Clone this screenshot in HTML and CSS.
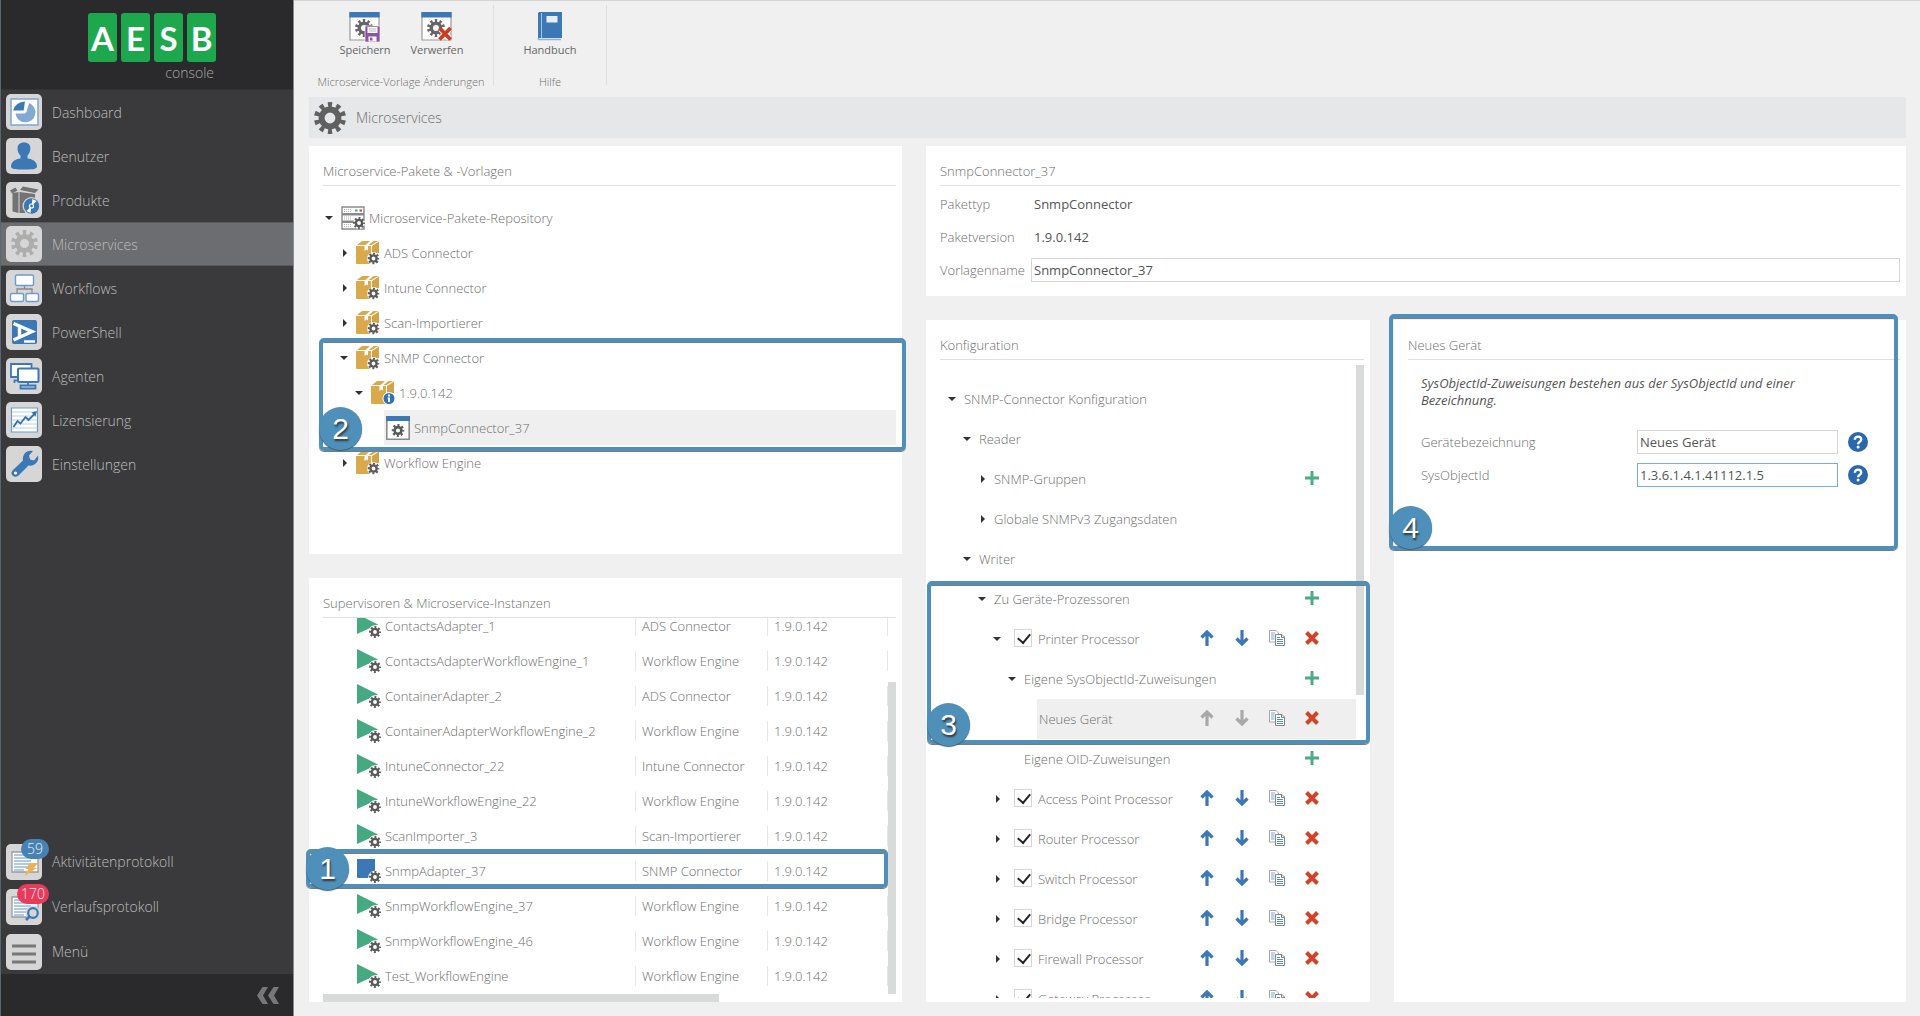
FILE: index.html
```
<!DOCTYPE html>
<html lang="de">
<head>
    <meta charset="UTF-8">
    <meta name="viewport" content="width=device-width, initial-scale=1.0">
    <title>AESB console - Microservices</title>
    <link rel="stylesheet" href="styles.css">
</head>
<body>
    <!-- Icon definitions -->
    <svg class="defs" aria-hidden="true">
        <symbol id="gear" viewBox="0 0 32 32">
            <circle cx="16" cy="16" r="8.4" fill="none" stroke="currentColor" stroke-width="6"/>
            <circle cx="16" cy="16" r="13" fill="none" stroke="currentColor" stroke-width="6" pathLength="20" stroke-dasharray="1 1" stroke-dashoffset="-4.5"/>
        </symbol>
        <symbol id="gear-small" viewBox="0 0 32 32">
            <circle cx="16" cy="16" r="8.4" fill="none" stroke="currentColor" stroke-width="6.5"/>
            <circle cx="16" cy="16" r="13" fill="none" stroke="currentColor" stroke-width="6" pathLength="16" stroke-dasharray="1 1" stroke-dashoffset="-3.5"/>
        </symbol>
        <symbol id="package" viewBox="0 0 24 24">
            <path d="M0 5h15v18H1q-1 0-1-1z" fill="#d9a94b"/>
            <path d="M16 5l7-4.500V12l-4 1-3 3z" fill="#d3a346"/>
            <path d="M1 4l5-4h17l-6.500 4z" fill="#d9a94b"/>
            <path d="M14 0h3.500l-5.500 4.500v5l-1.500-1-2 1.500V5z" fill="#fff"/>
            <path d="M0 4.500h15.500l7-4.300" stroke="#fff" stroke-width=".8" fill="none"/>
        </symbol>
        <symbol id="package-gear" viewBox="0 0 24 24">
            <use href="#package"/>
            <circle cx="17.500" cy="17.500" r="6.500" fill="#fff"/>
            <use href="#gear-small" x="11.500" y="11.500" width="12" height="12" color="#5a5a5a"/>
        </symbol>
        <symbol id="package-info" viewBox="0 0 24 24">
            <use href="#package"/>
            <circle cx="18" cy="17.500" r="6.500" fill="#fff"/>
            <circle cx="18" cy="17.500" r="5.500" fill="#2f72b8"/>
            <path d="M17 13.500h2v2h-2zM16.500 16.500H19V21h-2v-3.500h-.5z" fill="#fff"/>
        </symbol>
        <symbol id="server" viewBox="0 0 24 24">
            <path d="M1 1h22v6.700H1zM1 8.700h22v6.500H1zM1 16.200h22V23H1z" fill="#fff" stroke="#8a8a8a" stroke-width="1.400"/>
            <path d="M3 3.500h8M3 5.500h8M3 11h8M3 13h8M3 18.500h8M3 20.500h8" stroke="#b5b5b5" stroke-width="1.200" stroke-dasharray="1 1"/>
            <path d="M14 4.500h2.500" stroke="#45a982" stroke-width="2"/>
            <path d="M18.500 4.500H21" stroke="#d2452f" stroke-width="2"/>
            <circle cx="18" cy="17" r="6" fill="#fff"/>
            <use href="#gear-small" x="12" y="11" width="12" height="12" color="#5a5a5a"/>
        </symbol>
        <symbol id="template" viewBox="0 0 24 24">
            <path d="M.8.8h22.400v22.400H.8z" fill="#fff" stroke="#8a8a8a" stroke-width="1.600"/>
            <path d="M0 0h24v5H0z" fill="#3c78b5"/>
            <use href="#gear-small" x="5.500" y="8" width="13" height="13" color="#5a5a5a"/>
        </symbol>
        <symbol id="running" viewBox="0 0 24 24">
            <path d="M0 0l21 10.500L0 20z" fill="#45a982"/>
            <circle cx="18" cy="18" r="6.800" fill="#fff"/>
            <use href="#gear-small" x="12" y="12" width="12" height="12" color="#5a5a5a"/>
        </symbol>
        <symbol id="stopped" viewBox="0 0 24 24">
            <path d="M0 0h18v19H1q-1 0-1-1z" fill="#3c78b5"/>
            <circle cx="18" cy="18.500" r="6.800" fill="#fff"/>
            <use href="#gear-small" x="12" y="12" width="12" height="12" color="#5a5a5a"/>
        </symbol>
        <symbol id="plus" viewBox="0 0 16 16">
            <path d="M8 1v14M1 8h14" stroke="#4dab83" stroke-width="3"/>
        </symbol>
        <symbol id="up" viewBox="0 0 16 16">
            <path d="M8 16V3M2.500 7.500L8 2l5.500 5.500" fill="none" stroke="currentColor" stroke-width="3.200"/>
        </symbol>
        <symbol id="down" viewBox="0 0 16 16">
            <path d="M8 0v13M2.500 8.500L8 14l5.500-5.500" fill="none" stroke="currentColor" stroke-width="3.200"/>
        </symbol>
        <symbol id="copy" viewBox="0 0 16 16">
            <path d="M.5.500h6.500l2.500 2.500v9H.5z" fill="#fff" stroke="#a5a5a5"/>
            <path d="M2 3h4M2 5h3.500M2 7h3.500M2 9h3.500" stroke="#77a9dc"/>
            <path d="M6.500 4.500H13l2.500 2.500v8.500h-9z" fill="#fff" stroke="#858585"/>
            <path d="M12.500 4.500V7.500h3" fill="none" stroke="#858585"/>
            <path d="M8 7.500h3M8 9.500h6M8 11.500h6M8 13.500h6" stroke="#4c8fd3" stroke-width="1.200"/>
        </symbol>
        <symbol id="delete" viewBox="0 0 16 16">
            <path d="M2.500 2.500l11 11M13.500 2.500l-11 11" stroke="#cf4527" stroke-width="4"/>
        </symbol>
        <symbol id="help" viewBox="0 0 20 20">
            <circle cx="10" cy="10" r="10" fill="#2a67ad"/>
            <path d="M6.800 7.700C6.800 3.500 13.200 3.700 13.200 7.500c0 2.500-3.100 2.300-3.100 4.800" fill="none" stroke="#fff" stroke-width="2.400"/>
            <circle cx="10.100" cy="15" r="1.500" fill="#fff"/>
        </symbol>
        <symbol id="window-gear" viewBox="0 0 32 30">
            <path d="M1 1h29v27H1z" fill="#fff" stroke="#999" stroke-width="1.200"/>
            <path d="M.4 0h30.200v5.500H.4z" fill="#3c78b5"/>
            <use href="#gear" x="6" y="7" width="18" height="18" color="#666"/>
        </symbol>
        <symbol id="log" viewBox="0 0 36 36">
            <path d="M6 8h26v20H6z" fill="#fff" stroke="#9a9a9a" stroke-width="1.300"/>
            <path d="M8 11h17M8 14h17M8 17h17M8 20h16M8 23h14M8 26h10" stroke="#5e95cc" stroke-width="1.200"/>
        </symbol>
    </svg>

    <aside class="sidebar">
        <div class="logo">
            <div class="logo-tiles"><span>A</span><span>E</span><span>S</span><span>B</span></div>
            <div class="logo-sub">console</div>
        </div>

        <nav class="nav">
            <a href="#">
                <svg class="tile" viewBox="0 0 36 36">
                    <path d="M5 5h27v26H5z" fill="#fff" stroke="#7fa6d2" stroke-width="1.500"/>
                    <path d="M18 16.500H7.500A10.500 9.500 0 0 1 18 7.500z" fill="#3c78b5" transform="skewX(-8) translate(2 0)"/>
                    <path d="M20.500 18L23 9a10 10 0 1 1-13.500 10.500h9z" fill="#83a9d3"/>
                </svg>
                Dashboard
            </a>
            <a href="#">
                <svg class="tile" viewBox="0 0 36 36">
                    <path d="M18 4.500c9 0 7 10 3.500 13v3c5 .5 9.500 3 9.500 8 0 3-6 3-13 3s-13 0-13-3c0-5 4.500-7.500 9.500-8v-3C11 14.500 9 4.500 18 4.500z" fill="#3c78b5"/>
                </svg>
                Benutzer
            </a>
            <a href="#">
                <svg class="tile" viewBox="0 0 36 36">
                    <path d="M6.500 11l6-1v21l-6-1.500zM13.500 10l15.500 2v19H13.500zM4 8.500L9.500 5.500 11.500 8.500 6 11.500zM14 8l3-3.500 15.500 3L29 11z" fill="#737373"/>
                    <circle cx="25.500" cy="24" r="9" fill="#d6d6d6"/>
                    <circle cx="25.500" cy="24" r="7.700" fill="#3c78b5"/>
                    <path d="M25.500 24l1-7 4 2zM25.500 24l-1 7-4-2z" fill="#fff"/>
                    <circle cx="25.500" cy="24" r="2" fill="#3c78b5" stroke="#fff" stroke-width="1.200"/>
                </svg>
                Produkte
            </a>
            <a href="#" class="active">
                <svg class="tile" viewBox="0 0 36 36"><use href="#gear" x="5" y="4" width="27" height="27" color="#adadad"/></svg>
                Microservices
            </a>
            <a href="#">
                <svg class="tile" viewBox="0 0 36 36">
                    <path d="M18.500 15v4M11 23v-4h15v4" fill="none" stroke="#888" stroke-width="1.300"/>
                    <g fill="#fff" stroke="#6c9bcd" stroke-width="1.400">
                        <rect x="9.500" y="5" width="18" height="10.500" rx="1.500"/>
                        <rect x="4.500" y="23.500" width="13" height="8" rx="1.500"/>
                        <rect x="20" y="23.500" width="12.500" height="8" rx="1.500"/>
                    </g>
                </svg>
                Workflows
            </a>
            <a href="#">
                <svg class="tile" viewBox="0 0 36 36">
                    <rect x="6" y="6" width="25" height="24" rx="2" fill="#3c78b5"/>
                    <path d="M7.500 9.500L26 17.500 7.500 26M13.500 12v11" fill="none" stroke="#fff" stroke-width="3.400"/>
                    <path d="M18 27.500h11" stroke="#fff" stroke-width="2.400"/>
                </svg>
                PowerShell
            </a>
            <a href="#">
                <svg class="tile" viewBox="0 0 36 36">
                    <path d="M8.500 25v-2.500h4M5 6h20.500v13H5z" fill="#fff" stroke="#3c78b5" stroke-width="1.800"/>
                    <rect x="12" y="10.500" width="20.500" height="13.500" rx="1" fill="#fff" stroke="#3c78b5" stroke-width="2"/>
                    <path d="M22 24v3M14.500 27.500h15v3h-15z" fill="#d6d6d6" stroke="#3c78b5" stroke-width="1.800"/>
                </svg>
                Agenten
            </a>
            <a href="#">
                <svg class="tile" viewBox="0 0 36 36">
                    <path d="M5.500 6h26v24h-26z" fill="#fff" stroke="#6c9bcd" stroke-width="1.200"/>
                    <path d="M6 10h25M6 14h25M6 18h25M6 22h25M6 26h25" stroke="#b8cfe8"/>
                    <path d="M7.500 25l4-6 3 2.500 5-6.500 3 3 7-7" fill="none" stroke="#3670ad" stroke-width="1.800"/>
                    <path d="M25.500 10.500L31 9l-1.500 5.500z" fill="#3670ad"/>
                </svg>
                Lizensierung
            </a>
            <a href="#">
                <svg class="tile" viewBox="0 0 36 36">
                    <path d="M7 24L17 14.500C16 8 21 3.500 27 5l-4 4.500 1 4 4 1 4-5c1.500 6-3 11-9.500 10L12.500 29.500C8 33 3 28 7 24z" fill="#3c78b5"/>
                    <circle cx="9.500" cy="27" r="1.600" fill="#fff"/>
                </svg>
                Einstellungen
            </a>
        </nav>

        <nav class="nav nav-bottom">
            <a href="#">
                <svg class="tile" viewBox="0 0 36 36"><use href="#log"/><path d="M24 19h8l-4 5h3L18.500 32l4-7h-3z" fill="#edb258"/></svg>
                Aktivitätenprotokoll
                <span class="count">59</span>
            </a>
            <a href="#">
                <svg class="tile" viewBox="0 0 36 36"><use href="#log"/><circle cx="27" cy="24" r="7.500" fill="#d6d6d6"/><circle cx="27" cy="24" r="4.800" fill="none" stroke="#3c78b5" stroke-width="2.200"/><path d="M23.500 27.500L20 31" stroke="#3c78b5" stroke-width="2.600"/></svg>
                Verlaufsprotokoll
                <span class="count count-alert">170</span>
            </a>
            <a href="#">
                <svg class="tile" viewBox="0 0 36 36"><path d="M6 12h24M6 20h24M6 28h24" stroke="#777" stroke-width="3"/></svg>
                Menü
            </a>
        </nav>

        <div class="sidebar-footer">
            <button class="icon-button" aria-label="Einklappen">
                <svg width="22" height="17" viewBox="0 0 22 17"><path d="M11 0L6 8.500l5 8.500H5.500L0 8.500 5.500 0zM22 0l-5 8.500 5 8.500h-5.500L11 8.500 16.500 0z" fill="#777779"/></svg>
            </button>
        </div>
    </aside>

    <main class="main">
        <div class="ribbon">
            <div class="ribbon-group">
                <div class="ribbon-buttons">
                    <button class="ribbon-button">
                        <svg width="32" height="30" viewBox="0 0 32 30">
                            <use href="#window-gear"/>
                            <path d="M16 14h15v16H16z" fill="#8e52a8" stroke="#fff" stroke-width=".6"/>
                            <path d="M18.500 15h10v6h-10zM19.500 24.500h8v5h-8z" fill="#fff"/>
                            <path d="M20 17h7M20 19h7" stroke="#bbb"/>
                            <path d="M21 25.500h2.500v3H21z" fill="#8e52a8"/>
                        </svg>
                        Speichern
                    </button>
                    <button class="ribbon-button">
                        <svg width="32" height="30" viewBox="0 0 32 30">
                            <use href="#window-gear"/>
                            <path d="M19.500 17l9 9.500M28.500 17l-9 9.500" stroke="#fff" stroke-width="5.500"/>
                            <path d="M18.500 16l11 11.500M29.500 16l-11 11.500" stroke="#cc3d20" stroke-width="3.800"/>
                        </svg>
                        Verwerfen
                    </button>
                </div>
                <div class="ribbon-label">Microservice-Vorlage Änderungen</div>
            </div>
            <div class="ribbon-group ribbon-group-small">
                <div class="ribbon-buttons">
                    <button class="ribbon-button">
                        <svg width="32" height="30" viewBox="0 0 32 30">
                            <path d="M5 0h23v26H4V1z" fill="#3c78b5"/>
                            <path d="M7.500 1v25" stroke="#a9c4e0"/>
                            <path d="M4.500 26v1.500H27" stroke="#8fb4da" fill="none" stroke-width="1.500"/>
                            <path d="M12.500 4h11v6.500h-11z" fill="#e8eef6"/>
                        </svg>
                        Handbuch
                    </button>
                </div>
                <div class="ribbon-label">Hilfe</div>
            </div>
        </div>

        <div class="titlebar">
            <svg width="32" height="32"><use href="#gear"/></svg>
            <h1>Microservices</h1>
        </div>

        <div class="columns">
            <div class="col-left">
                <section class="panel panel-packages">
                    <h2>Microservice-Pakete &amp; -Vorlagen</h2>
                    <ul class="tree">
                        <li class="row"><button class="caret open" aria-label="Zuklappen"></button><span class="node"><svg class="icon"><use href="#server"/></svg>Microservice-Pakete-Repository</span></li>
                        <li class="row level-1"><button class="caret" aria-label="Aufklappen"></button><span class="node"><svg class="icon"><use href="#package-gear"/></svg>ADS Connector</span></li>
                        <li class="row level-1"><button class="caret" aria-label="Aufklappen"></button><span class="node"><svg class="icon"><use href="#package-gear"/></svg>Intune Connector</span></li>
                        <li class="row level-1"><button class="caret" aria-label="Aufklappen"></button><span class="node"><svg class="icon"><use href="#package-gear"/></svg>Scan-Importierer</span></li>
                        <li class="row level-1"><button class="caret open" aria-label="Zuklappen"></button><span class="node"><svg class="icon"><use href="#package-gear"/></svg>SNMP Connector</span></li>
                        <li class="row level-2"><button class="caret open" aria-label="Zuklappen"></button><span class="node"><svg class="icon"><use href="#package-info"/></svg>1.9.0.142</span></li>
                        <li class="row level-3"><span class="caret-space"></span><span class="node selected"><svg class="icon"><use href="#template"/></svg>SnmpConnector_37</span></li>
                        <li class="row level-1"><button class="caret" aria-label="Aufklappen"></button><span class="node"><svg class="icon"><use href="#package-gear"/></svg>Workflow Engine</span></li>
                    </ul>
                    <div class="mark mark-2"><span>2</span></div>
                </section>

                <section class="panel panel-instances">
                    <h2>Supervisoren &amp; Microservice-Instanzen</h2>
                    <div class="scroll-area">
                        <div class="scroll-view">
                            <table class="instances">
                                <tr><td><svg class="icon"><use href="#running"/></svg>ContactsAdapter_1</td><td>ADS Connector</td><td>1.9.0.142</td></tr>
                                <tr><td><svg class="icon"><use href="#running"/></svg>ContactsAdapterWorkflowEngine_1</td><td>Workflow Engine</td><td>1.9.0.142</td></tr>
                                <tr><td><svg class="icon"><use href="#running"/></svg>ContainerAdapter_2</td><td>ADS Connector</td><td>1.9.0.142</td></tr>
                                <tr><td><svg class="icon"><use href="#running"/></svg>ContainerAdapterWorkflowEngine_2</td><td>Workflow Engine</td><td>1.9.0.142</td></tr>
                                <tr><td><svg class="icon"><use href="#running"/></svg>IntuneConnector_22</td><td>Intune Connector</td><td>1.9.0.142</td></tr>
                                <tr><td><svg class="icon"><use href="#running"/></svg>IntuneWorkflowEngine_22</td><td>Workflow Engine</td><td>1.9.0.142</td></tr>
                                <tr><td><svg class="icon"><use href="#running"/></svg>ScanImporter_3</td><td>Scan-Importierer</td><td>1.9.0.142</td></tr>
                                <tr><td><svg class="icon"><use href="#stopped"/></svg>SnmpAdapter_37</td><td>SNMP Connector</td><td>1.9.0.142</td></tr>
                                <tr><td><svg class="icon"><use href="#running"/></svg>SnmpWorkflowEngine_37</td><td>Workflow Engine</td><td>1.9.0.142</td></tr>
                                <tr><td><svg class="icon"><use href="#running"/></svg>SnmpWorkflowEngine_46</td><td>Workflow Engine</td><td>1.9.0.142</td></tr>
                                <tr><td><svg class="icon"><use href="#running"/></svg>Test_WorkflowEngine</td><td>Workflow Engine</td><td>1.9.0.142</td></tr>
                            </table>
                        </div>
                        <div class="scrollbar-v"><div class="thumb thumb-instances"></div></div>
                        <div class="scrollbar-h"><div class="thumb"></div></div>
                    </div>
                    <div class="mark mark-1"><span>1</span></div>
                </section>
            </div>

            <div class="col-right">
                <section class="panel panel-template">
                    <h2>SnmpConnector_37</h2>
                    <div class="template-form">
                        <span>Pakettyp</span><span class="value">SnmpConnector</span>
                        <span>Paketversion</span><span class="value">1.9.0.142</span>
                        <label for="templateName">Vorlagenname</label><input type="text" id="templateName" value="SnmpConnector_37">
                    </div>
                </section>

                <div class="lower">
                    <section class="panel panel-config">
                        <h2>Konfiguration</h2>
                        <div class="config-body">
                            <ul class="tree config">
                                <li class="row"><button class="caret open" aria-label="Zuklappen"></button><span class="node">SNMP-Connector Konfiguration</span></li>
                                <li class="row level-1"><button class="caret open" aria-label="Zuklappen"></button><span class="node">Reader</span></li>
                                <li class="row level-2"><button class="caret" aria-label="Aufklappen"></button><span class="node">SNMP-Gruppen<span class="actions"><button class="icon-button" aria-label="Hinzufügen"><svg><use href="#plus"/></svg></button></span></span></li>
                                <li class="row level-2"><button class="caret" aria-label="Aufklappen"></button><span class="node">Globale SNMPv3 Zugangsdaten</span></li>
                                <li class="row level-1"><button class="caret open" aria-label="Zuklappen"></button><span class="node">Writer</span></li>
                                <li class="row level-2"><button class="caret open" aria-label="Zuklappen"></button><span class="node">Zu Geräte-Prozessoren<span class="actions"><button class="icon-button" aria-label="Hinzufügen"><svg><use href="#plus"/></svg></button></span></span></li>
                                <li class="row level-3">
                                    <button class="caret open" aria-label="Zuklappen"></button>
                                    <span class="node"><input type="checkbox" id="printer" checked><label for="printer">Printer Processor</label>
                                    <span class="actions"><button class="icon-button" aria-label="Nach oben"><svg><use href="#up"/></svg></button><button class="icon-button" aria-label="Nach unten"><svg><use href="#down"/></svg></button><button class="icon-button" aria-label="Kopieren"><svg><use href="#copy"/></svg></button><button class="icon-button" aria-label="Löschen"><svg><use href="#delete"/></svg></button></span></span>
                                </li>
                                <li class="row level-4"><button class="caret open" aria-label="Zuklappen"></button><span class="node">Eigene SysObjectId-Zuweisungen<span class="actions"><button class="icon-button" aria-label="Hinzufügen"><svg><use href="#plus"/></svg></button></span></span></li>
                                <li class="row level-5">
                                    <span class="caret-space"></span>
                                    <span class="node selected">Neues Gerät
                                    <span class="actions"><button class="icon-button" aria-label="Nach oben" disabled><svg><use href="#up"/></svg></button><button class="icon-button" aria-label="Nach unten" disabled><svg><use href="#down"/></svg></button><button class="icon-button" aria-label="Kopieren"><svg><use href="#copy"/></svg></button><button class="icon-button" aria-label="Löschen"><svg><use href="#delete"/></svg></button></span></span>
                                </li>
                                <li class="row level-4"><span class="caret-space"></span><span class="node">Eigene OID-Zuweisungen<span class="actions"><button class="icon-button" aria-label="Hinzufügen"><svg><use href="#plus"/></svg></button></span></span></li>
                                <li class="row level-3">
                                    <button class="caret" aria-label="Aufklappen"></button>
                                    <span class="node"><input type="checkbox" id="accessPoint" checked><label for="accessPoint">Access Point Processor</label>
                                    <span class="actions"><button class="icon-button" aria-label="Nach oben"><svg><use href="#up"/></svg></button><button class="icon-button" aria-label="Nach unten"><svg><use href="#down"/></svg></button><button class="icon-button" aria-label="Kopieren"><svg><use href="#copy"/></svg></button><button class="icon-button" aria-label="Löschen"><svg><use href="#delete"/></svg></button></span></span>
                                </li>
                                <li class="row level-3">
                                    <button class="caret" aria-label="Aufklappen"></button>
                                    <span class="node"><input type="checkbox" id="router" checked><label for="router">Router Processor</label>
                                    <span class="actions"><button class="icon-button" aria-label="Nach oben"><svg><use href="#up"/></svg></button><button class="icon-button" aria-label="Nach unten"><svg><use href="#down"/></svg></button><button class="icon-button" aria-label="Kopieren"><svg><use href="#copy"/></svg></button><button class="icon-button" aria-label="Löschen"><svg><use href="#delete"/></svg></button></span></span>
                                </li>
                                <li class="row level-3">
                                    <button class="caret" aria-label="Aufklappen"></button>
                                    <span class="node"><input type="checkbox" id="switch" checked><label for="switch">Switch Processor</label>
                                    <span class="actions"><button class="icon-button" aria-label="Nach oben"><svg><use href="#up"/></svg></button><button class="icon-button" aria-label="Nach unten"><svg><use href="#down"/></svg></button><button class="icon-button" aria-label="Kopieren"><svg><use href="#copy"/></svg></button><button class="icon-button" aria-label="Löschen"><svg><use href="#delete"/></svg></button></span></span>
                                </li>
                                <li class="row level-3">
                                    <button class="caret" aria-label="Aufklappen"></button>
                                    <span class="node"><input type="checkbox" id="bridge" checked><label for="bridge">Bridge Processor</label>
                                    <span class="actions"><button class="icon-button" aria-label="Nach oben"><svg><use href="#up"/></svg></button><button class="icon-button" aria-label="Nach unten"><svg><use href="#down"/></svg></button><button class="icon-button" aria-label="Kopieren"><svg><use href="#copy"/></svg></button><button class="icon-button" aria-label="Löschen"><svg><use href="#delete"/></svg></button></span></span>
                                </li>
                                <li class="row level-3">
                                    <button class="caret" aria-label="Aufklappen"></button>
                                    <span class="node"><input type="checkbox" id="firewall" checked><label for="firewall">Firewall Processor</label>
                                    <span class="actions"><button class="icon-button" aria-label="Nach oben"><svg><use href="#up"/></svg></button><button class="icon-button" aria-label="Nach unten"><svg><use href="#down"/></svg></button><button class="icon-button" aria-label="Kopieren"><svg><use href="#copy"/></svg></button><button class="icon-button" aria-label="Löschen"><svg><use href="#delete"/></svg></button></span></span>
                                </li>
                                <li class="row level-3">
                                    <button class="caret" aria-label="Aufklappen"></button>
                                    <span class="node"><input type="checkbox" id="gateway" checked><label for="gateway">Gateway Processor</label>
                                    <span class="actions"><button class="icon-button" aria-label="Nach oben"><svg><use href="#up"/></svg></button><button class="icon-button" aria-label="Nach unten"><svg><use href="#down"/></svg></button><button class="icon-button" aria-label="Kopieren"><svg><use href="#copy"/></svg></button><button class="icon-button" aria-label="Löschen"><svg><use href="#delete"/></svg></button></span></span>
                                </li>
                            </ul>
                            <div class="scrollbar-v"><div class="thumb thumb-config"></div></div>
                        </div>
                        <div class="mark mark-3"><span>3</span></div>
                    </section>

                    <section class="panel panel-device">
                        <h2>Neues Gerät</h2>
                        <div class="device-form">
                            <p>SysObjectId-Zuweisungen bestehen aus der SysObjectId und einer Bezeichnung.</p>
                            <div class="field">
                                <label for="deviceName">Gerätebezeichnung</label>
                                <input type="text" id="deviceName" value="Neues Gerät">
                                <button class="icon-button" aria-label="Hilfe"><svg class="help"><use href="#help"/></svg></button>
                            </div>
                            <div class="field">
                                <label for="sysObjectId">SysObjectId</label>
                                <input type="text" id="sysObjectId" class="focused" value="1.3.6.1.4.1.41112.1.5">
                                <button class="icon-button" aria-label="Hilfe"><svg class="help"><use href="#help"/></svg></button>
                            </div>
                        </div>
                        <div class="mark mark-4"><span>4</span></div>
                    </section>
                </div>
            </div>
        </div>
    </main>
</body>
</html>
```
FILE: styles.css
```
* {
    box-sizing: border-box;
}

body {
    display: flex;
    height: 100vh;
    margin: 0;
    overflow: hidden;
    background: #f0f0f0;
    color: #6e6e6e;
    font-family: "Segoe UI Light", "Open Sans", sans-serif;
    font-size: 13px;
    font-weight: 300;
}

.defs {
    position: absolute;
    width: 0;
    height: 0;
}

ul {
    list-style: none;
    margin: 0;
    padding: 0;
}

button {
    padding: 0;
    border: none;
    background: none;
    color: inherit;
    font: inherit;
    cursor: pointer;
}

svg {
    flex: none;
    display: block;
}

/* Sidebar */
.sidebar {
    display: flex;
    flex-direction: column;
    flex: none;
    width: 294px;
    border-left: 1px solid #5c6670;
    border-right: 1px solid #8a8a8a;
    background: #3a3a3c;
}

.logo {
    display: flex;
    flex-direction: column;
    align-items: center;
    height: 90px;
    padding: 13px 0 0 10px;
    background: #2a2a2c;
    border-bottom: 1px solid #333335;
}

.logo-tiles {
    display: flex;
    gap: 4px;
}

.logo-tiles span {
    width: 29px;
    height: 49px;
    border-radius: 3px;
    background: #1da84d;
    color: #fff;
    font-family: Lato, sans-serif;
    font-size: 33px;
    font-weight: 700;
    line-height: 50px;
    text-align: center;
}

.logo-sub {
    width: 124px;
    color: #a8a8a8;
    font-size: 14px;
    line-height: 22px;
    text-align: right;
}

.nav a {
    position: relative;
    display: flex;
    align-items: center;
    gap: 10px;
    height: 44px;
    padding-left: 5px;
    color: #bdbdbd;
    font-size: 14px;
    text-decoration: none;
}

.nav a.active {
    background: #6c6d70;
    box-shadow: inset 0 1px #59595b, inset 0 -1px #59595b;
}

.nav-bottom {
    margin-top: auto;
}

.nav-bottom a {
    height: 45px;
}

.tile {
    width: 36px;
    height: 36px;
    border-radius: 5px;
    background: #d6d6d6;
}

.count {
    position: absolute;
    top: 0;
    left: 20px;
    min-width: 28px;
    padding: 0 4px;
    border-radius: 10px;
    background: #4682b4;
    color: #e8eef4;
    font-size: 14px;
    line-height: 20px;
    text-align: center;
}

.count-alert {
    left: 16px;
    background: #ea3a5c;
}

.sidebar-footer {
    display: flex;
    align-items: center;
    justify-content: flex-end;
    height: 42px;
    padding-right: 14px;
    background: #2a2a2c;
}

/* Main area */
.main {
    display: flex;
    flex-direction: column;
    flex: 1;
    min-width: 0;
    padding: 0 14px 14px 15px;
    border-top: 1px solid #d4d4d4;
}

.ribbon {
    display: flex;
    height: 96px;
    padding: 4px 0 12px;
}

.ribbon-group {
    display: flex;
    flex-direction: column;
    justify-content: space-between;
    align-items: center;
    width: 185px;
    border-right: 1px solid #e0e0e0;
}

.ribbon-group-small {
    width: 113px;
}

.ribbon-buttons {
    display: flex;
    padding-top: 7px;
}

.ribbon-button {
    display: flex;
    flex-direction: column;
    align-items: center;
    width: 72px;
    color: #666;
    font-size: 11px;
    font-weight: 400;
    line-height: 16px;
}

.ribbon-label {
    font-size: 11px;
    line-height: 14px;
    margin-bottom: -4px;
}

.titlebar {
    display: flex;
    align-items: center;
    gap: 10px;
    height: 41px;
    padding-left: 5px;
    background: #e6e7e8;
    color: #606060;
}

h1 {
    margin: 0;
    color: #6e6e6e;
    font-size: 14px;
    font-weight: 300;
}

.columns {
    display: flex;
    flex: 1;
    gap: 24px;
    min-height: 0;
    padding-top: 8px;
}

.col-left,
.col-right {
    display: flex;
    flex-direction: column;
    gap: 24px;
    min-width: 0;
}

.col-left {
    flex: 593 1 0;
}

.col-right {
    flex: 980 1 0;
}

.panel {
    position: relative;
    display: flex;
    flex-direction: column;
    min-width: 0;
    min-height: 0;
    padding: 14px 6px 0 14px;
    background: #fff;
}

.panel-packages {
    flex: 408 1 0;
}

.panel-instances {
    flex: 424 1 0;
}

h2 {
    flex: none;
    height: 26px;
    margin: 0;
    border-bottom: 1px solid #dfdfdf;
    font-size: 13px;
    font-weight: 300;
    line-height: 23px;
}

/* Trees */
.tree {
    padding-top: 14px;
}

.row {
    display: flex;
    height: 35px;
}

.level-1 { padding-left: 15px; }
.level-2 { padding-left: 30px; }
.level-3 { padding-left: 45px; }
.level-4 { padding-left: 60px; }
.level-5 { padding-left: 75px; }

.caret,
.caret-space {
    flex: none;
    width: 16px;
}

.caret::before {
    content: "";
    display: block;
    width: 0;
    margin-left: 5px;
    border: 4px solid transparent;
    border-left-color: #333;
    border-right-width: 0;
}

.caret.open::before {
    margin-left: 2px;
    border: 4px solid transparent;
    border-top-color: #333;
    border-bottom-width: 0;
}

.node {
    display: flex;
    align-items: center;
    flex: 1;
    gap: 4px;
    padding-left: 2px;
}

.selected {
    background: #efefef;
}

.icon {
    width: 24px;
    height: 24px;
}

/* Instances table */
.scroll-area {
    display: grid;
    grid-template-columns: 1fr 8px;
    grid-template-rows: 1fr 8px;
    flex: 1;
    min-height: 0;
}

.scroll-view {
    overflow: hidden;
}

.instances {
    width: 100%;
    margin-top: -10px;
    border-collapse: collapse;
    table-layout: fixed;
}

.instances tr {
    height: 35px;
}

.instances td {
    padding: 0 0 0 6px;
    background: linear-gradient(#e6e6e6, #e6e6e6) right center / 1px 20px no-repeat;
    white-space: nowrap;
}

.instances td:first-child {
    width: 313px;
    padding-left: 34px;
}

.instances td:nth-child(2) {
    width: 132px;
}

.instances .icon {
    float: left;
    margin: -3px 4px -3px 0;
}

.thumb {
    background: #d9dbda;
}

.scrollbar-h .thumb {
    width: 70%;
    height: 8px;
}

.scrollbar-v {
    display: flex;
    flex: none;
    width: 8px;
}

.thumb-instances {
    flex: 1;
    margin-top: 64px;
}

.thumb-config {
    flex: 1;
    height: 330px;
    margin-top: 5px;
}

/* Template details */
.panel-template {
    flex: none;
    padding-bottom: 10px;
}

.template-form {
    display: grid;
    grid-template-columns: 91px 1fr;
    grid-auto-rows: 33px;
    align-items: center;
    padding-top: 1px;
}

.value,
input[type="text"] {
    padding-left: 2px;
    color: #555;
    font-family: inherit;
    font-size: 13px;
    font-weight: 400;
}

.value {
    padding-left: 3px;
}

input[type="text"] {
    height: 24px;
    min-width: 0;
    border: 1px solid #d6d6d6;
    background: #fff;
    outline: none;
}

input.focused {
    border-color: #72b0e4;
}

/* Lower row: configuration and device */
.lower {
    display: grid;
    grid-template-columns: 444fr 512fr;
    grid-template-rows: minmax(0, 1fr);
    flex: 1;
    gap: 24px;
    min-height: 0;
}

.panel-config {
    padding-bottom: 4px;
}

.config-body {
    display: flex;
    flex: 1;
    min-height: 0;
}

.config {
    flex: 1;
    overflow: hidden;
    padding: 19px 0 0 6px;
}

.config .row {
    height: 40px;
}

.config input[type="checkbox"] {
    appearance: none;
    width: 18px;
    height: 18px;
    margin: -2px 2px 0 5px;
    border: 1px solid #d6d6d6;
    background: #fff;
}

.config input[type="checkbox"]:checked::before {
    content: "";
    display: block;
    width: 6px;
    height: 10px;
    margin: 1px 0 0 5px;
    border: solid #222;
    border-width: 0 2px 2px 0;
    transform: rotate(40deg);
}

.actions {
    display: flex;
    margin-left: auto;
    padding-right: 27px;
}

.actions .icon-button {
    display: flex;
    justify-content: center;
    width: 35px;
    padding-bottom: 3px;
    color: #3c78b5;
}

.actions .icon-button:disabled {
    color: #a9a9a9;
}

.node .actions svg {
    width: 16px;
    height: 16px;
}

/* Device form */
.device-form {
    padding: 15px 13px;
}

.device-form p {
    width: 420px;
    max-width: 100%;
    margin: 0 0 21px;
    color: #555;
    font-style: italic;
    font-weight: 400;
    line-height: 17px;
}

.field {
    display: flex;
    align-items: center;
    height: 24px;
    margin-bottom: 9px;
}

.field label {
    width: 216px;
}

.field input {
    width: 201px;
    margin-right: 10px;
}

.help {
    width: 20px;
    height: 20px;
}

/* Numbered callouts */
.mark {
    position: absolute;
    z-index: 1;
    border: 4px solid #4f90bb;
    border-radius: 5px;
    box-shadow: 0 1px #7b7b7b, inset 0 1px #7b7b7b;
    pointer-events: none;
}

.mark span {
    position: absolute;
    bottom: -3px;
    left: -4px;
    width: 43px;
    height: 43px;
    border-radius: 50%;
    background: #4f90bb;
    box-shadow: 0 1px 1px #3c5f78;
    color: #fff;
    font-family: "Liberation Sans", sans-serif;
    font-size: 30px;
    font-weight: 400;
    line-height: 43px;
    text-align: center;
    text-shadow: 1px 2px 2px #333;
}

.mark-1 {
    top: 271px;
    left: -3px;
    right: 14px;
    height: 39px;
}

.mark-2 {
    top: 192px;
    left: 10px;
    right: -4px;
    height: 113px;
}

.mark-3 {
    top: 261px;
    left: 1px;
    right: 0;
    height: 163px;
}

.mark-1 span,
.mark-3 span {
    bottom: -6px;
}

.mark-4 {
    top: -6px;
    left: -5px;
    right: 8px;
    height: 236px;
}
```
